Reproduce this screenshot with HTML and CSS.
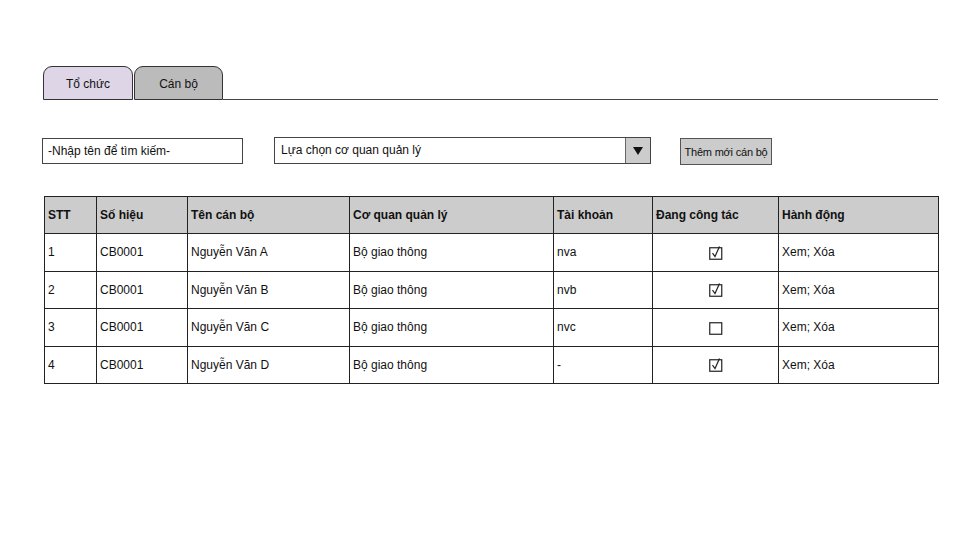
FILE: index.html
```html
<!DOCTYPE html>
<html lang="vi">
<head>
<meta charset="utf-8">
<title>Cán bộ</title>
<link rel="stylesheet" href="styles.css">
</head>
<body>
<div class="page">
  <div class="tabs">
    <div class="tab tab-active">Tổ chức</div>
    <div class="tab tab-current">Cán bộ</div>
    <div class="tab-line"></div>
  </div>

  <div class="toolbar">
    <div class="search">-Nhập tên để tìm kiếm-</div>
    <div class="select">
      <span class="select-text">Lựa chọn cơ quan quản lý</span>
      <span class="select-arrow">
        <svg width="10" height="8" viewBox="0 0 10 8"><path d="M0 0 L10 0 L5 8 Z" fill="#111"/></svg>
      </span>
    </div>
    <div class="btn">Thêm mới cán bộ</div>
  </div>

  <table class="grid">
    <colgroup>
      <col class="c1"><col class="c2"><col class="c3"><col class="c4"><col class="c5"><col class="c6"><col class="c7">
    </colgroup>
    <thead>
      <tr>
        <th>STT</th><th>Số hiệu</th><th>Tên cán bộ</th><th>Cơ quan quản lý</th><th>Tài khoản</th><th>Đang công tác</th><th>Hành động</th>
      </tr>
    </thead>
    <tbody>
      <tr>
        <td>1</td><td>CB0001</td><td>Nguyễn Văn A</td><td>Bộ giao thông</td><td>nva</td>
        <td class="center"><span class="chk"><svg width="15" height="15" viewBox="0 0 15 15"><rect x="0.75" y="2.75" width="12" height="11.5" fill="none" stroke="#222" stroke-width="1.2"/><path d="M3.5 8.2 L6 11.5 L10.5 1.5" fill="none" stroke="#222" stroke-width="1.2"/></svg></span></td>
        <td>Xem; Xóa</td>
      </tr>
      <tr>
        <td>2</td><td>CB0001</td><td>Nguyễn Văn B</td><td>Bộ giao thông</td><td>nvb</td>
        <td class="center"><span class="chk"><svg width="15" height="15" viewBox="0 0 15 15"><rect x="0.75" y="2.75" width="12" height="11.5" fill="none" stroke="#222" stroke-width="1.2"/><path d="M3.5 8.2 L6 11.5 L10.5 1.5" fill="none" stroke="#222" stroke-width="1.2"/></svg></span></td>
        <td>Xem; Xóa</td>
      </tr>
      <tr>
        <td>3</td><td>CB0001</td><td>Nguyễn Văn C</td><td>Bộ giao thông</td><td>nvc</td>
        <td class="center"><span class="chk"><svg width="15" height="15" viewBox="0 0 15 15"><rect x="0.75" y="2.75" width="12" height="11.5" fill="none" stroke="#222" stroke-width="1.2"/></svg></span></td>
        <td>Xem; Xóa</td>
      </tr>
      <tr>
        <td>4</td><td>CB0001</td><td>Nguyễn Văn D</td><td>Bộ giao thông</td><td>-</td>
        <td class="center"><span class="chk"><svg width="15" height="15" viewBox="0 0 15 15"><rect x="0.75" y="2.75" width="12" height="11.5" fill="none" stroke="#222" stroke-width="1.2"/><path d="M3.5 8.2 L6 11.5 L10.5 1.5" fill="none" stroke="#222" stroke-width="1.2"/></svg></span></td>
        <td>Xem; Xóa</td>
      </tr>
    </tbody>
  </table>
</div>
</body>
</html>
```

FILE: styles.css
```css
html, body {
  margin: 0;
  padding: 0;
  background: #ffffff;
}
body {
  font-family: "Liberation Sans", Arial, sans-serif;
  font-size: 12px;
  color: #111;
}
.page {
  padding: 66px 39px 0 43px;
  width: 895px;
}
.tabs {
  display: flex;
  align-items: flex-end;
  height: 34px;
}
.tab {
  box-sizing: border-box;
  width: 90px;
  height: 34px;
  border: 1.5px solid #333;
  border-radius: 9px 9px 0 0;
  display: flex;
  align-items: center;
  justify-content: center;
  font-size: 12px;
  padding-top: 2px;
}
.tab-active {
  background: #ded6e7;
}
.tab-current {
  background: #bbbbbb;
  margin-left: 1px;
  width: 89px;
}
.tab-line {
  flex: 1;
  height: 0;
  border-bottom: 1.5px solid #444;
}
.toolbar {
  display: flex;
  align-items: center;
  margin-top: 37px;
  margin-left: -1px;
  height: 27px;
}
.search {
  box-sizing: border-box;
  width: 201px;
  height: 26px;
  border: 1.5px solid #444;
  padding: 5px 0 0 5px;
  font-size: 12px;
}
.select {
  box-sizing: border-box;
  width: 377px;
  height: 27px;
  border: 1.5px solid #444;
  margin-left: 31px;
  display: flex;
  align-items: stretch;
}
.select-text {
  flex: 1;
  padding: 5px 0 0 6px;
  font-size: 12px;
}
.select-arrow {
  width: 24px;
  background: #cccccc;
  border-left: 1.5px solid #666;
  display: flex;
  align-items: center;
  justify-content: center;
}
.btn {
  box-sizing: border-box;
  width: 92px;
  height: 27px;
  margin-left: 29px;
  margin-top: 2px;
  background: #cccccc;
  border: 1.5px solid #555;
  display: flex;
  align-items: center;
  justify-content: center;
  font-size: 11px;
  letter-spacing: -0.2px;
  white-space: nowrap;
}
.grid {
  margin-top: 32px;
  margin-left: 1px;
  border-collapse: collapse;
  width: 894px;
  table-layout: fixed;
  border: 1.5px solid #222;
}
.c1 { width: 52px; }
.c2 { width: 91px; }
.c3 { width: 162px; }
.c4 { width: 204px; }
.c5 { width: 99px; }
.c6 { width: 126px; }
.c7 { width: 160px; }
.grid th, .grid td {
  border: 1.2px solid #222;
  text-align: left;
  padding: 0 0 0 3px;
  white-space: nowrap;
  overflow: hidden;
}
.grid th {
  background: #cccccc;
  height: 36px;
  font-weight: bold;
  font-size: 12px;
}
.grid td {
  height: 36.5px;
  font-size: 12px;
}
.grid td.center {
  text-align: center;
  padding: 0;
}
.chk {
  display: inline-block;
  vertical-align: middle;
  margin-left: 2px;
  height: 15px;
}
.chk svg {
  display: block;
}
```
